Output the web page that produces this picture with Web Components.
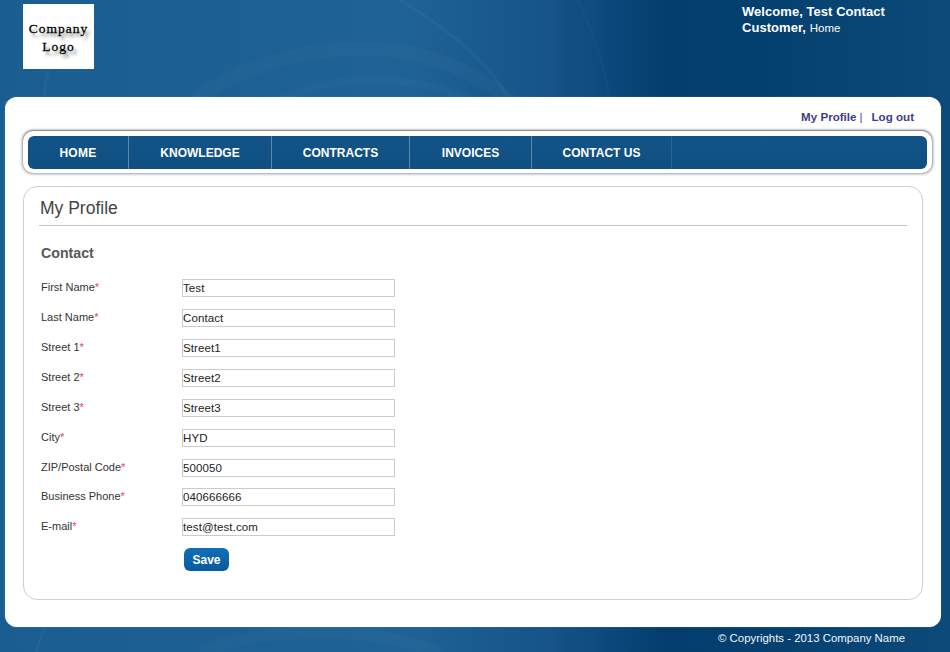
<!DOCTYPE html>
<html lang="en">
<head>
<meta charset="utf-8">
<title>My Profile</title>
<style>
  html, body { margin: 0; padding: 0; }
  body {
    font-family: "Liberation Sans", Arial, sans-serif;
    background: linear-gradient(90deg, #1a5d91 0%, #1f6296 43%, #155388 58%, #033e6e 70%, #04406f 80%, #0c4a7a 100%);
  }
</style>
</head>
<body>
<portal-page>
  <site-header slot="header"></site-header>
  <main-panel slot="panel">
    <top-links></top-links>
    <main-nav></main-nav>
    <profile-card></profile-card>
  </main-panel>
  <site-footer slot="footer"></site-footer>
</portal-page>

<script>
class PortalPage extends HTMLElement {
  connectedCallback() {
    this.attachShadow({ mode: 'open' });
    this.shadowRoot.innerHTML = `
    <style>
      :host { display: block; position: relative; height: 652px; overflow: hidden; }
      .swoosh { position: absolute; left: 0; top: 0; }
      .stack { position: relative; display: flex; flex-direction: column; height: 100%; }
    </style>
    <svg class="swoosh" width="950" height="652" viewBox="0 0 950 652" fill="none" stroke="#fff" aria-hidden="true">
      <path d="M195 100C250 58 330 44 390 50C440 56 480 76 510 100" stroke-opacity=".022" stroke-width="14"/>
      <path d="M280 100C330 76 400 70 470 100" stroke-opacity=".02" stroke-width="8"/>
      <path d="M400 0C450 30 490 65 510 100" stroke-opacity=".03" stroke-width="3"/>
      <path d="M578 0C592 30 604 65 610 100" stroke-opacity=".018" stroke-width="3"/>
      <path d="M44 97C46 72 52 58 62 44" stroke-opacity=".03" stroke-width="3"/>
      <path d="M200 652C250 632 350 620 440 652" stroke-opacity=".025" stroke-width="12"/>
      <path d="M36 652L44 628" stroke-opacity=".03" stroke-width="3"/>
    </svg>
    <div class="stack">
      <slot name="header"></slot>
      <slot name="panel"></slot>
      <slot name="footer"></slot>
    </div>`;
  }
}

class SiteHeader extends HTMLElement {
  connectedCallback() {
    this.attachShadow({ mode: 'open' });
    this.shadowRoot.innerHTML = `
    <style>
      :host { display: flex; justify-content: space-between; align-items: flex-start; height: 97px; box-sizing: border-box; padding: 4px 0 0 23px; flex: none; }
      .logo {
        width: 71px; height: 65px; background: #fff; color: #000;
        display: flex; flex-direction: column; align-items: center; justify-content: center; gap: 0;
        font: 13.5px/17px "Liberation Serif", serif; letter-spacing: 1px;
        -webkit-text-stroke: .3px #000;
        text-shadow: 3px 4px 3px rgba(0,0,0,.5);
      }
      .logo div { margin-top: 1px; }
      .welcome {
        width: 208px; color: #fff;
        font-size: 13px; font-weight: bold; line-height: 16px; letter-spacing: .05px;
      }
      .welcome span { font-size: 11.5px; font-weight: normal; }
    </style>
    <div class="logo"><div>Company</div><div>Logo</div></div>
    <div class="welcome">Welcome, Test Contact<br>Customer, <span>Home</span></div>`;
  }
}

class MainPanel extends HTMLElement {
  connectedCallback() {
    this.attachShadow({ mode: 'open' });
    this.shadowRoot.innerHTML = `
    <style>
      :host {
        display: block; box-sizing: border-box; height: 530px; width: 936px; margin-left: 5px;
        padding: 13px 18px 0 17px; background: #fff; border-radius: 12px;
        box-shadow: 0 0 1px rgba(255,255,255,.5);
      }
    </style>
    <slot></slot>`;
  }
}

class TopLinks extends HTMLElement {
  connectedCallback() {
    this.attachShadow({ mode: 'open' });
    this.shadowRoot.innerHTML = `
    <style>
      :host { display: flex; justify-content: flex-end; height: 21px; padding-right: 9px; font-size: 11.6px; font-weight: bold; line-height: 14px; color: #3e3d84; }
      a { color: inherit; text-decoration: none; }
      .sep { font-weight: normal; margin: 0 9px 0 3px; }
    </style>
    <a href="#">My Profile</a><span class="sep">|</span><a href="#">Log out</a>`;
  }
}

class MainNav extends HTMLElement {
  connectedCallback() {
    this.attachShadow({ mode: 'open' });
    const items = ['HOME', 'KNOWLEDGE', 'CONTRACTS', 'INVOICES', 'CONTACT US'];
    this.shadowRoot.innerHTML = `
    <style>
      :host {
        display: block; box-sizing: border-box; width: 909px; height: 42px; margin-left: 1px; padding: 5px 5px 4px;
        background: #fff; border-radius: 10px;
        box-shadow: 0 0 3px 1px rgba(0,0,0,.4), 0 -1px 1px #bdbdbd;
      }
      ul {
        display: grid; grid-template-columns: 101px 143px 138px 122px 140px; height: 33px; margin: 0; padding: 0; list-style: none;
        background: linear-gradient(#135488, #0f4f82); border-radius: 6px;
      }
      li {
        display: flex; align-items: center; justify-content: center; border-right: 1px solid #5d8aa9;
        color: #fff; font-size: 12px; font-weight: bold;
      }
      li:first-child { letter-spacing: .3px; }
      li:last-child { border-right-color: #2a6591; }
    </style>
    <ul>${items.map(i => `<li>${i}</li>`).join('')}</ul>`;
  }
}

class FormRow extends HTMLElement {
  connectedCallback() {
    this.attachShadow({ mode: 'open' });
    this.shadowRoot.innerHTML = `
    <style>
      :host { display: grid; grid-template-columns: 141px 213px; height: 30px; align-items: start; font-size: 11px; }
      label { color: #333; line-height: 17px; }
      label i { color: #ea3a6c; font-style: normal; }
      input {
        box-sizing: border-box; width: 213px; height: 18px; margin: 0; padding: 0; background: #fff;
        border: 1px solid #cbcbcb; outline: none;
        font: 11.5px "Liberation Sans", Arial, sans-serif; letter-spacing: .1px; color: #222;
      }
    </style>
    <label for="f">${this.getAttribute('label')}<i>*</i></label>
    <input id="f" type="text" value="${this.getAttribute('value')}">`;
  }
}

class ProfileCard extends HTMLElement {
  connectedCallback() {
    this.attachShadow({ mode: 'open' });
    this.shadowRoot.innerHTML = `
    <style>
      :host {
        display: block; box-sizing: border-box; height: 414px; width: 900px; margin: 13px 0 0 1px;
        padding: 0 15px 0 15px; border: 1px solid #cfcfcf; border-radius: 14px;
      }
      h1 {
        margin: 0; height: 39px; box-sizing: border-box; padding: 10px 0 0 1px; border-bottom: 1px solid #c4c4c4;
        font-size: 17.5px; font-weight: normal; line-height: 22px; color: #444;
      }
      h2 { margin: 19px 0 17px 2px; font-size: 14.2px; line-height: 17px; font-weight: bold; color: #595959; }
      form { margin-left: 2px; }
      form-row:nth-of-type(7) { height: 29px; }
      button {
        display: block; width: 45px; height: 23px; margin: 0 0 0 143px; padding: 0;
        border: 0; border-radius: 6px; background: linear-gradient(#0f70b8, #0a5a9c);
        color: #fff; font: bold 12px "Liberation Sans", Arial, sans-serif;
      }
    </style>
    <h1>My Profile</h1>
    <h2>Contact</h2>
    <form onsubmit="return false">
      <form-row label="First Name" value="Test"></form-row>
      <form-row label="Last Name" value="Contact"></form-row>
      <form-row label="Street 1" value="Street1"></form-row>
      <form-row label="Street 2" value="Street2"></form-row>
      <form-row label="Street 3" value="Street3"></form-row>
      <form-row label="City" value="HYD"></form-row>
      <form-row label="ZIP/Postal Code" value="500050"></form-row>
      <form-row label="Business Phone" value="040666666"></form-row>
      <form-row label="E-mail" value="test@test.com"></form-row>
      <button type="button">Save</button>
    </form>`;
  }
}

class SiteFooter extends HTMLElement {
  connectedCallback() {
    this.attachShadow({ mode: 'open' });
    this.shadowRoot.innerHTML = `
    <style>
      :host { display: block; flex: none; height: 25px; padding: 4px 45px 0 0; box-sizing: border-box; text-align: right; color: #f2f6fa; font-size: 11.4px; line-height: 14px; }
    </style>
    © Copyrights - 2013 Company Name`;
  }
}

customElements.define('form-row', FormRow);
customElements.define('profile-card', ProfileCard);
customElements.define('main-nav', MainNav);
customElements.define('top-links', TopLinks);
customElements.define('main-panel', MainPanel);
customElements.define('site-header', SiteHeader);
customElements.define('site-footer', SiteFooter);
customElements.define('portal-page', PortalPage);
</script>
</body>
</html>
